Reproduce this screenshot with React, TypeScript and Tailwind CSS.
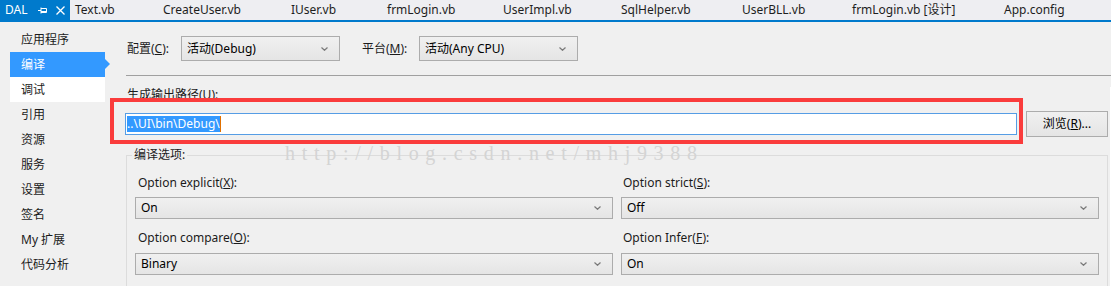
import React from "react";

const tabs = [
  { t: "Text.vb", c: "w-[88px]" },
  { t: "CreateUser.vb", c: "w-[128px]" },
  { t: "IUser.vb", c: "w-[96px]" },
  { t: "frmLogin.vb", c: "w-[116px]" },
  { t: "UserImpl.vb", c: "w-[118px]" },
  { t: "SqlHelper.vb", c: "w-[121px]" },
  { t: "UserBLL.vb", c: "w-[110px]" },
  { t: "frmLogin.vb [设计]", c: "w-[152px]" },
  { t: "App.config", c: "flex-1" },
];

const side = ["应用程序", "编译", "调试", "引用", "资源", "服务", "设置", "签名", "My 扩展", "代码分析"];

function Chevron() {
  return (
    <svg width="7" height="4" viewBox="0 0 7 4" className="shrink-0">
      <polyline points="0.5,0.5 3.5,3.3 6.5,0.5" fill="none" stroke="#7a7a7a" strokeWidth="1.2" />
    </svg>
  );
}

function Select({ children, className }: { children: React.ReactNode; className: string }) {
  return (
    <div
      className={
        "flex items-center justify-between border border-[#acacac] bg-linear-to-b from-[#f0f0f0] to-[#e5e5e5] pl-[5px] pr-[11px] text-[12px] text-black " +
        className
      }
    >
      <span>{children}</span>
      <Chevron />
    </div>
  );
}

export default function App() {
  return (
    <div className="relative w-[1111px] h-[286px] overflow-hidden bg-[#f0f0f0] font-['Noto_Sans','Noto_Sans_CJK_SC',sans-serif] text-[12px] text-[#1b1b1b]">
      {/* Tab bar */}
      <div className="flex h-[20px] bg-[#eeeef2] text-[12px] text-[#1e1e1e]">
        <div className="flex w-[70px] items-center bg-[#007acc] pl-[5px] text-white">
          <span className="w-[33px]">DAL</span>
          <svg width="9" height="9" viewBox="0 0 9 9" className="mr-[9px]">
            <path d="M0 4.5H3M3 1.5V7.5M3 2.5H8.5V6.5H3M3 5.5H8.5" fill="none" stroke="white" strokeWidth="1" />
          </svg>
          <svg width="9" height="9" viewBox="0 0 9 9">
            <path d="M0.5 0.5L8.5 8.5M8.5 0.5L0.5 8.5" stroke="white" strokeWidth="1.3" />
          </svg>
        </div>
        {tabs.map((x) => (
          <div key={x.t} className={"flex items-center pl-[5px] whitespace-nowrap " + x.c}>
            {x.t}
          </div>
        ))}
      </div>
      <div className="h-[2px] bg-[#007acc]" />

      <div className="flex">
        {/* Sidebar */}
        <div className="w-[110px] shrink-0 pl-[10px] pr-[5px] pt-[5px]">
          {side.map((s) => (
            <div
              key={s}
              className={
                "relative flex h-[25px] items-center pl-[11px] " +
                (s === "编译" ? "bg-[#3399ff] text-white" : s === "调试" ? "bg-white" : "")
              }
            >
              {s}
              {s === "编译" && (
                <span className="absolute right-[-5px] top-[7px] h-0 w-0 border-y-[5px] border-l-[5px] border-y-transparent border-l-[#3399ff]" />
              )}
            </div>
          ))}
        </div>

        {/* Content */}
        <div className="flex-1">
          <div className="mt-[14px] flex h-[25px] items-center pl-[17px]">
            <span className="w-[54px]">
              配置(<u>C</u>):
            </span>
            <Select className="h-[25px] w-[159px]">活动(Debug)</Select>
            <span className="ml-[22px] w-[57px]">
              平台(<u>M</u>):
            </span>
            <Select className="h-[25px] w-[159px]">活动(Any CPU)</Select>
          </div>
          <div className="mt-[14px] ml-[16px] h-px bg-[#a0a0a0]" />

          <div className="border-r border-white pl-[17px]">
            <div className="mt-[11px] h-[16px] leading-[16px]">
              生成输出路径(<u>U</u>):
            </div>
            <div className="mt-[8px] flex h-[26px] items-center">
              <div className="ml-[-2px] flex h-[22px] w-[892px] items-center border border-[#569de5] bg-white pl-[1px]">
                <span className="bg-[#3399ff] leading-[16px] text-white">..\UI\bin\Debug\</span>
                <span className="h-[16px] w-px bg-[#e07000]" />
              </div>
              <button className="ml-[9px] h-[26px] w-[82px] border border-[#acacac] bg-linear-to-b from-[#f0f0f0] to-[#e5e5e5] text-[12px] text-black">
                浏览(<u>R</u>)...
              </button>
            </div>

            <fieldset className="mt-[10px] ml-[-1px] w-[982px] border border-[#dcdcdc] pb-[20px]">
              <legend className="ml-[5px] px-[2px] leading-[16px]">编译选项:</legend>
              <div className="flex gap-x-[8px] pl-[8px]">
                <div className="flex w-[478px] flex-col">
                  <div className="mt-[12px] h-[16px] pl-[3px] leading-[16px]">
                    Option explicit(<u>X</u>):
                  </div>
                  <Select className="mt-[6px] h-[22px] w-[478px]">On</Select>
                  <div className="mt-[11px] h-[16px] pl-[3px] leading-[16px]">
                    Option compare(<u>O</u>):
                  </div>
                  <Select className="mt-[7px] h-[22px] w-[478px]">Binary</Select>
                </div>
                <div className="flex w-[478px] flex-col">
                  <div className="mt-[12px] h-[16px] pl-[2px] leading-[16px]">
                    Option strict(<u>S</u>):
                  </div>
                  <Select className="mt-[6px] h-[22px] w-[478px]">Off</Select>
                  <div className="mt-[11px] h-[16px] pl-[2px] leading-[16px]">
                    Option Infer(<u>F</u>):
                  </div>
                  <Select className="mt-[7px] h-[22px] w-[478px]">On</Select>
                </div>
              </div>
            </fieldset>
          </div>
        </div>
      </div>

      {/* Watermark */}
      <div className="pointer-events-none absolute left-[285px] top-[141px] font-['Liberation_Serif',serif] text-[20px] leading-[24px] tracking-[6.7px] text-[#d4d4d4]">
        http://blog.csdn.net/mhj9388
      </div>

      {/* Red highlight box */}
      <div className="pointer-events-none absolute left-[110px] top-[98px] h-[46px] w-[913px] border-[4px] border-[#fa3c3c]" />
    </div>
  );
}
